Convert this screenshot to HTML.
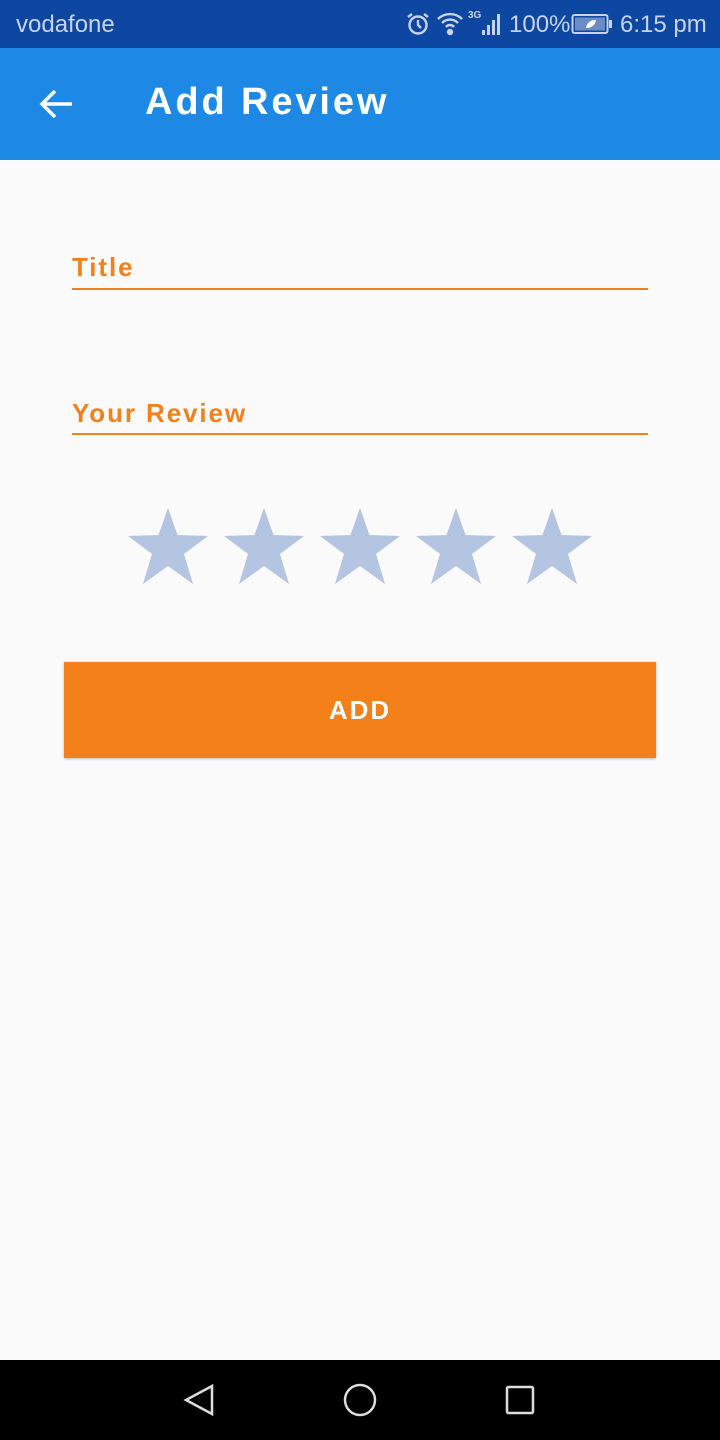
<!DOCTYPE html>
<html><head><meta charset="utf-8"><style>
*{margin:0;padding:0;box-sizing:border-box}
body{width:720px;height:1440px;background:#fafafa;font-family:"Liberation Sans",sans-serif;position:relative;overflow:hidden}
.sb{position:absolute;top:0;left:0;width:720px;height:48px;background:#0d47a1;color:#c8d3ea;font-size:24px}
.ab{position:absolute;top:48px;left:0;width:720px;height:112px;background:#1e88e5;color:#fff}
.lbl{position:absolute;left:72px;color:#f0821e;font-size:26px;font-weight:bold;letter-spacing:1.9px}
.line{position:absolute;left:72px;width:576px;height:2px;background:#f0821e}
.btn{position:absolute;left:64px;top:662px;width:592px;height:96px;background:#f48019;color:#fff;font-size:26px;font-weight:bold;text-align:center;line-height:96px;letter-spacing:2px;box-shadow:0 1px 3px rgba(0,0,0,.25)}
.nav{position:absolute;left:0;top:1360px;width:720px;height:80px;background:#000}
</style></head><body>
<div class="sb">
<span style="position:absolute;left:16px;top:11px">vodafone</span>
<svg style="position:absolute;left:405px;top:12px" width="26" height="24" viewBox="0 0 26 24" fill="none" stroke="#c8d3ea" stroke-width="2.4"><circle cx="13" cy="13" r="8.5"/><path d="M13 8v5l3 3M3 5l4-3M23 5l-4-3"/></svg>
<svg style="position:absolute;left:436px;top:12px" width="30" height="24" viewBox="0 0 30 24" fill="none" stroke="#c8d3ea" stroke-width="2.4"><path d="M2 7a17 17 0 0 1 24 0M6 11a11 11 0 0 1 16 0M10 15a5 5 0 0 1 8 0"/><circle cx="14" cy="20" r="2" fill="#c8d3ea"/></svg>
<span style="position:absolute;left:468px;top:10px;font-size:10px;font-weight:bold">3G</span>
<svg style="position:absolute;left:480px;top:12px" width="24" height="24" viewBox="0 0 24 24" fill="#c8d3ea"><rect x="2" y="18" width="3" height="5"/><rect x="7" y="13" width="3" height="10"/><rect x="12" y="8" width="3" height="15"/><rect x="17" y="2" width="3" height="21"/></svg>
<span style="position:absolute;left:509px;top:11px">100%</span>
<svg style="position:absolute;left:571px;top:13px" width="42" height="22" viewBox="0 0 42 22"><rect x="1.5" y="2" width="35" height="18" rx="2" fill="none" stroke="#c8d3ea" stroke-width="2"/><rect x="4" y="4.5" width="30" height="13" fill="#c8d3ea" opacity=".5"/><rect x="38" y="7" width="3" height="8" fill="#c8d3ea"/><path d="M15 15c1-6 5-8 10-8-1 5-4 8-10 8z" fill="#fff"/></svg>
<span style="position:absolute;left:620px;top:11px">6:15 pm</span>
</div>
<div class="ab">
<svg style="position:absolute;left:38px;top:40px" width="36" height="32" viewBox="0 0 36 32" fill="none" stroke="#fff" stroke-width="3.5"><path d="M34 16H4M17 3L4 16l13 13"/></svg>
<span style="position:absolute;left:145px;top:33px;font-size:38px;font-weight:bold;letter-spacing:2.9px">Add Review</span>
</div>
<div class="lbl" style="top:252px">Title</div>
<div class="line" style="top:288px"></div>
<div class="lbl" style="top:398px">Your Review</div>
<div class="line" style="top:433px"></div>
<svg style="position:absolute;left:0;top:500px" width="720" height="100">
<defs><polygon id="s" points="40,8 49.5,35 80,36 56,54 65,84 40,66 15,84 24,54 0,36 30.5,35" fill="#b3c5e1"/></defs>
<use href="#s" x="128"/><use href="#s" x="224"/><use href="#s" x="320"/><use href="#s" x="416"/><use href="#s" x="512"/>
</svg>
<div class="btn">ADD</div>
<div class="nav">
<svg style="position:absolute;left:180px;top:22px" width="40" height="40" viewBox="0 0 40 40" fill="none" stroke="#ddd" stroke-width="2.5"><path d="M32 4L6 18l26 14z"/></svg>
<svg style="position:absolute;left:340px;top:20px" width="40" height="40" viewBox="0 0 40 40" fill="none" stroke="#ddd" stroke-width="2.5"><circle cx="20" cy="20" r="15"/></svg>
<svg style="position:absolute;left:500px;top:20px" width="40" height="40" viewBox="0 0 40 40" fill="none" stroke="#ddd" stroke-width="2.5"><rect x="7" y="7" width="26" height="26" rx="1.5"/></svg>
</div>
</body></html>
